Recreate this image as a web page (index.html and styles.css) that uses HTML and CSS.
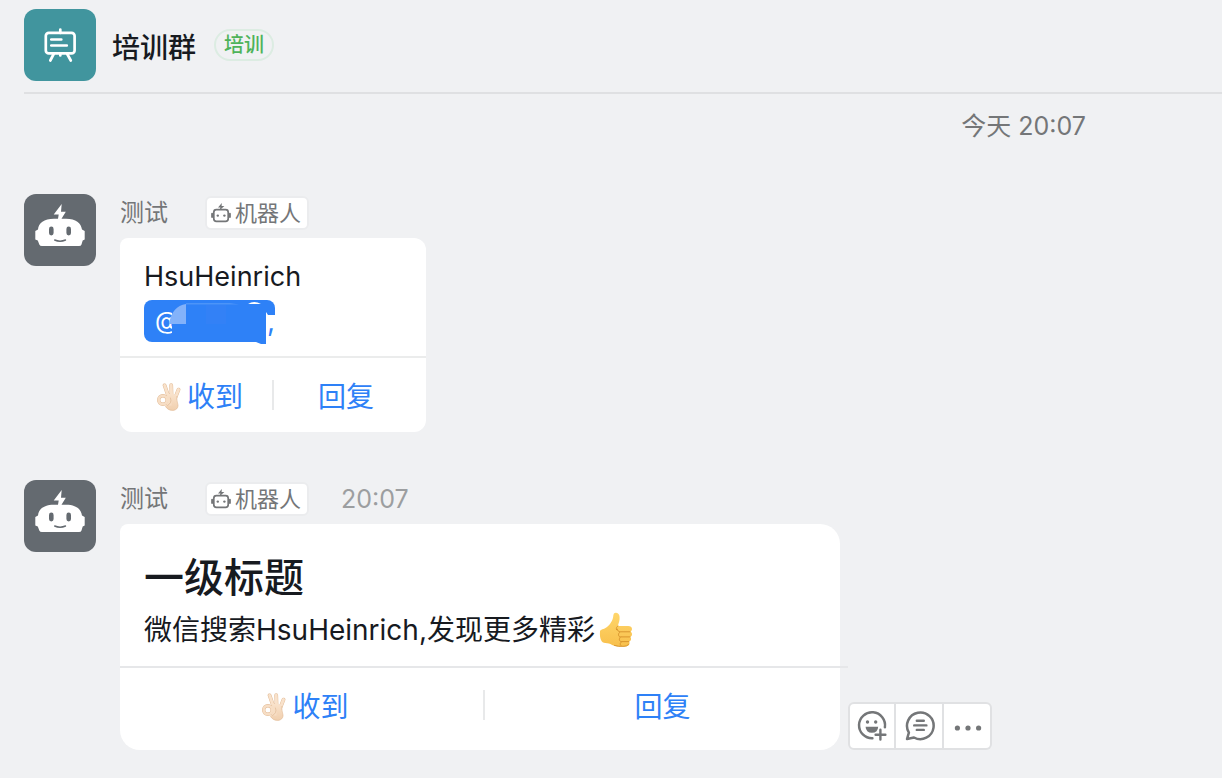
FILE: index.html
```html
<!DOCTYPE html>
<html lang="zh-CN">
<head>
<meta charset="utf-8">
<title>培训群</title>
<meta name="viewport" content="width=device-width, initial-scale=1">
<link rel="stylesheet" href="styles.css">
</head>
<body>
<svg class="defs" aria-hidden="true">
  <defs>
    <linearGradient id="skin" x1="0" y1="0" x2="0" y2="1"><stop offset="0" stop-color="#f9e2cb"/><stop offset="1" stop-color="#f0cfae"/></linearGradient>
    <linearGradient id="gold" x1="0" y1="0" x2="0" y2="1"><stop offset="0" stop-color="#ffd66b"/><stop offset="1" stop-color="#f8c04c"/></linearGradient>
  </defs>
  <symbol id="robot" viewBox="0 0 72 72">
    <path fill="#fff" d="M37.7 10 29.7 20.4h5L34 24.7h-4C20 24.7 14.500 29 14 35.500L11.300 37v8.500l2.500 1 1.500 4Q16 52 18 52h37q2 0 2.500-1.500l1.200-4 2-1V37L58 35.500C57 29 52 24.700 42 24.700h-4.500l4.300-7H37z"/>
    <g fill="#646a70"><rect x="25" y="32.600" width="4.600" height="8.800" rx="2.300"/><rect x="42.400" y="32.600" width="4.600" height="8.800" rx="2.300"/></g>
    <path d="M30.700 46q5.300 2.400 10.800 0" fill="none" stroke="#646a70" stroke-width="1.400" stroke-linecap="round"/>
  </symbol>
  <symbol id="bot" viewBox="0 0 20 20">
    <path d="M10.800 0 7 4.600h2.400L8.600 7.200 13.400 2.900H10.600z" fill="#747678"/>
    <rect x="2.800" y="6.600" width="14.400" height="11.800" rx="2.600" fill="none" stroke="#747678" stroke-width="1.700"/>
    <path d="M1.100 10.700v3.400M18.900 10.700v3.400" stroke="#747678" stroke-width="1.900" stroke-linecap="round"/>
    <circle cx="6.800" cy="12.600" r="1.200" fill="#747678"/><circle cx="13.400" cy="12.600" r="1.200" fill="#747678"/>
  </symbol>
  <symbol id="ok" viewBox="0 0 24 28">
    <g fill="none" stroke-linecap="round" stroke-linejoin="round">
      <path stroke="#e0b994" stroke-width="3.800" d="M7.600 2.400 11.600 14M14.200 2.200 14.600 14M21.500 6.600 17.800 16"/>
      <path stroke="#f9e2cb" stroke-width="2.900" d="M7.600 2.400 11.600 14M14.200 2.200 14.600 14M21.500 6.600 17.800 16"/>
    </g>
    <path fill="url(#skin)" d="M9.500 11.500q5-2 10 1.500c0 3.200.8 6.500 1.500 9 .3 3-2 5.500-5.500 5.500-3.300 0-5.300-1.500-7-4z"/>
    <path fill="none" stroke="#e0b994" stroke-width=".6" stroke-linecap="round" d="M19.700 13.500c0 3.200.7 5.900 1.300 8.500.3 3-2 5.400-5.500 5.400-3.300 0-5.300-1.400-7-3.900"/>
    <circle cx="5.900" cy="17" r="4.200" fill="none" stroke="#e0b994" stroke-width="3.400"/>
    <circle cx="5.900" cy="17" r="4.200" fill="none" stroke="#f7dec5" stroke-width="2.600"/>
    <path fill="#f7dec5" d="M9.500 13h5v9.500H9.300q2.500-5 .2-9.500z"/>
    <path fill="none" stroke="#e0b994" stroke-width=".7" stroke-linecap="round" d="M13.500 15q1 2.500 0 4.500-1 2-3 3"/>
  </symbol>
</svg>

<header class="topbar">
  <svg class="avatar avatar-group" viewBox="0 0 72 72" aria-hidden="true">
    <g fill="none" stroke="#fff" stroke-width="2.700" stroke-linecap="round" stroke-linejoin="round">
      <rect x="21.800" y="23.800" width="28.800" height="20.600" rx="3"/>
      <path d="M36.300 20.500V24M27.300 30.500h10M27.300 36.500h15.500M29.700 45l-3.400 6.500M43.200 45l3.600 6.500M36.300 44.500v2"/>
    </g>
  </svg>
  <h1 class="group-name">培训群</h1>
  <span class="tag">培训</span>
</header>

<main class="chat">
  <time class="day">今天 20:07</time>

  <article class="message">
    <svg class="avatar avatar-bot" aria-hidden="true"><use href="#robot"/></svg>
    <div class="content">
      <div class="meta">
        <span class="sender">测试</span>
        <span class="badge"><svg class="badge-icon" aria-hidden="true"><use href="#bot"/></svg>机器人</span>
      </div>
      <section class="card card-small">
        <div class="card-body card-body-small">
          <p class="text text-latin">HsuHeinrich</p>
          <a class="mention" href="#member"><span class="at">@</span><span class="comma">,</span>
            <svg class="mask" viewBox="0 0 131 44" aria-hidden="true">
              <path fill="#2e81f7" d="M28 5h95v37h-1v2h-5l-5-2H28z"/>
              <path fill="#83b2fa" d="M25 24h17V4q-14 2-17 20"/>
              <path fill="#4c94f8" d="M42 3h44l9 1.500H42z"/>
              <path fill="#3381f6" d="M62 5h20v19H62z"/>
              <path fill="#fff" d="M104 4q6-4 13 0zM122 12l2 3h7v1h-7v26h-2z"/>
            </svg>
          </a>
        </div>
        <div class="actions actions-small">
          <button class="action" type="button"><svg class="ok" aria-hidden="true"><use href="#ok"/></svg>收到</button>
          <button class="action" type="button">回复</button>
        </div>
      </section>
    </div>
  </article>

  <article class="message">
    <svg class="avatar avatar-bot" aria-hidden="true"><use href="#robot"/></svg>
    <div class="content">
      <div class="meta">
        <span class="sender">测试</span>
        <span class="badge"><svg class="badge-icon" aria-hidden="true"><use href="#bot"/></svg>机器人</span>
        <time class="sent">20:07</time>
      </div>
      <div class="card-row">
        <section class="card card-large">
          <div class="card-body">
            <h2 class="title">一级标题</h2>
            <p class="text">微信搜索HsuHeinrich,发现更多精彩<svg class="thumb" viewBox="0 0 34 36" role="img" aria-label="赞">
              <path fill="url(#gold)" d="M1 19.500C1 17.500 5 17.300 8 15c3-2.400 5.800-6.500 6.200-10.500C14.400 2 15 .5 17 .7c3.300.3 4 3.500 3.500 7-.3 2.300-1.200 4.300-1.600 6.300h10.300c2.300 0 3.800 1.300 3.800 3.100 0 1.200-.6 2-1.500 2.600 1 .6 1.500 1.400 1.500 2.600 0 1.300-.8 2.200-1.800 2.600.7.600 1 1.300.9 2.300-.2 1.300-1 2-2.100 2.400.5.600.7 1.200.5 2.100-.4 1.800-2 2.700-4.400 2.700-5 .4-9.300.2-13-1.500-2.300-1.100-4-1.800-6.800-1.800C2.300 31.100.4 26 1 19.500z"/>
              <path fill="none" stroke="#d9962f" stroke-width="1" stroke-linecap="round" d="M19 14c-1.500.8-2 2-1.500 3.700M31 19.800H21.500c-2-.2-3.200-1-3.300-2.700M31 24.900H21.500c-2.200 0-3-3.400-.6-4.800M29.800 29.600h-7.500c-2.100 0-2.700-3-.9-4.500M29.500 32.500q-1.500 1.800-4.500 1.800-6 .4-9.500-.8M22.500 29.800c-1.500.8-1.800 2.500-.7 3.600"/>
            </svg></p>
          </div>
          <div class="actions actions-large">
            <button class="action" type="button"><svg class="ok" aria-hidden="true"><use href="#ok"/></svg>收到</button>
            <button class="action" type="button">回复</button>
          </div>
        </section>
        <div class="toolbar" role="toolbar" aria-label="消息操作">
          <button class="tool" type="button" aria-label="表情">
            <svg class="tool-icon" viewBox="0 0 32 32" aria-hidden="true">
              <path d="M28.900 17.200A13 13 0 1 0 16.400 28.300" fill="none" stroke="#747678" stroke-width="2.500" stroke-linecap="round"/>
              <circle cx="11.500" cy="12" r="1.700" fill="#747678"/><circle cx="19.700" cy="12" r="1.700" fill="#747678"/>
              <path d="M9.600 16.700h12.600q-.3 6-6.300 6t-6.300-6z" fill="#747678"/>
              <path d="M24.400 19.800v9.700M19.600 24.700h9.800" stroke="#747678" stroke-width="2.400" stroke-linecap="round"/>
            </svg>
          </button>
          <button class="tool" type="button" aria-label="回复消息">
            <svg class="tool-icon" viewBox="0 0 32 32" aria-hidden="true">
              <path d="M5.900 22.600A13.300 13.300 0 1 1 11 27.500L4 29z" fill="none" stroke="#747678" stroke-width="2.500" stroke-linejoin="round"/>
              <path d="M13.800 10.700h7M11.200 15.400h12.200M13.800 19.900h7" stroke="#747678" stroke-width="2.400" stroke-linecap="round"/>
            </svg>
          </button>
          <button class="tool" type="button" aria-label="更多">
            <svg class="tool-icon" viewBox="0 0 32 32" aria-hidden="true">
              <g fill="#747678"><circle cx="6.400" cy="18" r="2.600"/><circle cx="17" cy="18" r="2.600"/><circle cx="27.600" cy="18" r="2.600"/></g>
            </svg>
          </button>
        </div>
      </div>
    </div>
  </article>
</main>
</body>
</html>
```

FILE: styles.css
```css
* { box-sizing: border-box; }

body {
  margin: 0;
  padding: 9px 0 28px 24px;
  background: #f0f1f3;
  color: #171a1f;
  font-family: Inter, "Noto Sans CJK SC", sans-serif;
  font-size: 28px;
  line-height: 36px;
}

h1, h2, p { margin: 0; }

svg { display: block; flex: none; }

button {
  font: inherit;
  cursor: pointer;
}

.defs {
  position: absolute;
  width: 0;
  height: 0;
}

.topbar {
  display: flex;
  align-items: center;
  padding-bottom: 11px;
  border-bottom: 2px solid #dfe0e2;
}

.avatar {
  width: 72px;
  height: 72px;
  border-radius: 12px;
}

.avatar-group { background: #41959e; }
.avatar-bot { background: #646a70; }

.group-name {
  margin-left: 16px;
  padding-top: 6px;
  font-size: 28px;
  font-weight: 500;
  -webkit-text-stroke: 0;
}

.tag {
  margin-left: 18px;
  padding: 0 8px;
  border: 2px solid #dcece2;
  border-radius: 16px;
  color: #4eb35a;
  font-size: 20px;
  font-weight: 500;
  line-height: 28px;
}

.chat {
  display: flex;
  flex-direction: column;
  gap: 48px;
}

.day {
  align-self: flex-end;
  padding: 16px 136px 4px 0;
  color: #747678;
  font-size: 25px;
  line-height: 32px;
}

.message {
  display: flex;
  gap: 24px;
}

.content {
  flex: 1;
  min-width: 0;
}

.meta {
  display: flex;
  align-items: flex-end;
  height: 36px;
  margin-bottom: 8px;
  color: #747678;
  font-size: 24px;
  line-height: 34px;
}

.badge {
  display: flex;
  align-items: center;
  gap: 4px;
  margin-left: 37px;
  padding: 0 6px 0 4px;
  border: 2px solid #ebecee;
  border-radius: 6px;
  background: #fff;
  font-size: 22px;
  line-height: 30px;
}

.badge-icon {
  width: 20px;
  height: 20px;
}

.sent {
  margin-left: 32px;
  color: #9c9ea0;
  font-size: 25px;
}

.card-row {
  display: flex;
  align-items: flex-end;
  gap: 8px;
}

.card { background: #fff; }

.card-small {
  width: 306px;
  border-radius: 8px 12px 12px 12px;
}

.card-large {
  flex: 0 1 720px;
  border-radius: 8px 20px 20px 20px;
}

.card-body { padding: 30px 24px 18px; }
.card-body-small { padding: 21px 24px 14px; }

.title {
  margin-bottom: 10px;
  font-size: 40px;
  font-weight: 500;
  line-height: 48px;
}

.text {
  display: flex;
  align-items: center;
}

.text-latin { font-size: 27px; }

.thumb {
  width: 34px;
  height: 36px;
  margin-left: 4px;
}

.mention {
  position: relative;
  display: flex;
  justify-content: space-between;
  width: 131px;
  margin-top: 5px;
  padding-left: 11px;
  border-radius: 8px;
  background: linear-gradient(#fff, #fff) 123px 15px / 8px 27px no-repeat #2e81f7;
  color: #fff;
  line-height: 42px;
  text-decoration: none;
}

.at { font-size: 24px; }

.comma { color: #2e81f7; }

.mask {
  position: absolute;
  top: 0;
  left: 0;
  width: 131px;
  height: 44px;
}

.actions {
  display: flex;
  border-top: 2px solid #ebecec;
}

.actions-small { padding: 22px 8px; }

.actions-large {
  margin-right: -8px;
  padding: 22px 8px 30px;
  border-color: #e6e7e9;
}

.action {
  display: flex;
  flex: 1;
  align-items: center;
  justify-content: center;
  gap: 6px;
  height: 30px;
  padding: 4px 0 0;
  border: 0;
  background: none;
  color: #2e81f7;
  line-height: 30px;
}

.action + .action { border-left: 2px solid #e8e9ea; }

.ok {
  width: 24px;
  height: 28px;
}

.toolbar { display: flex; }

.tool {
  display: flex;
  align-items: center;
  justify-content: center;
  width: 48px;
  height: 48px;
  padding: 0;
  border: 2px solid #e0e1e3;
  background: #fff;
}

.tool + .tool { border-left: 0; }
.tool:first-child { border-radius: 6px 0 0 6px; }
.tool:last-child { border-radius: 0 6px 6px 0; }

.tool-icon {
  width: 32px;
  height: 32px;
}
```
